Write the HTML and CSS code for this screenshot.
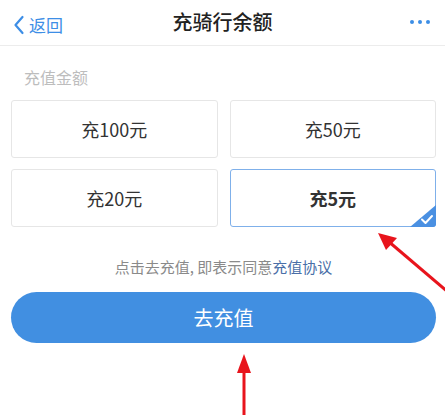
FILE: index.html
```html
<!DOCTYPE html>
<html>
<head>
    <meta charset="utf-8">
    <title>充骑行余额</title>
    <link rel="stylesheet" href="styles.css">
</head>
<body>
    <div class="ust-bar">
        <a class="geri">
            <svg width="12" height="20" viewBox="0 0 12 20"><path d="M9.5 2 L2.5 10 L9.5 18" fill="none" stroke="#3d8ee6" stroke-width="2.2" stroke-linecap="round" stroke-linejoin="round"/></svg>
            <span>返回</span>
        </a>
        <div class="baslik">充骑行余额</div>
        <div class="noktalar"><i></i><i></i><i></i></div>
    </div>

    <div class="icerik">
        <div class="etiket">充值金额</div>
        <div class="kartlar">
            <div class="kart">充100元</div>
            <div class="kart">充50元</div>
            <div class="kart">充20元</div>
            <div class="kart secili">充5元
                <span class="isaret">
                    <svg width="26" height="22" viewBox="0 0 26 22">
                        <path d="M26 0 L26 19 Q26 22 23 22 L0 22 Z" fill="#4a90e2"/>
                        <path d="M12 14.5 L15.5 18 L22 11" fill="none" stroke="#fff" stroke-width="2" stroke-linecap="round" stroke-linejoin="round"/>
                    </svg>
                </span>
            </div>
        </div>
        <p class="bilgi">点击去充值, 即表示同意<a>充值协议</a></p>
        <button class="dugme">去充值</button>
    </div>

    <!-- kırmızı oklar -->
    <svg class="oklar" width="445" height="415" viewBox="0 0 445 415">
        <line x1="455" y1="298" x2="388" y2="241" stroke="#e8141c" stroke-width="3"/>
        <path d="M378 233 L397 238 L386 250 Z" fill="#e8141c"/>
        <line x1="244" y1="415" x2="244" y2="370" stroke="#e8141c" stroke-width="3"/>
        <path d="M244 354 L251 373 L237 373 Z" fill="#e8141c"/>
    </svg>
</body>
</html>
```

FILE: styles.css
```css
body {margin:0; background:#fff; font-family:"Noto Sans CJK SC", "Noto Sans", sans-serif; color:#333;}

.ust-bar {
    position: relative;
    height: 45px;
    border-bottom: 1px solid #ececec;
    display: flex;
    align-items: center;
    justify-content: center;}
.geri {
    position: absolute;
    left: 13px;
    top: 12px;
    display: flex;
    align-items: center;
    gap: 4px;
    color: #3d8ee6;
    font-size: 17px;}
.baslik {font-size: 20px; font-weight: 500; color: #222; margin-top: -2px;}
.noktalar {
    position: absolute;
    right: 15px;
    top: 20px;
    display: flex;
    gap: 4px;}
.noktalar i {display:block; width:4px; height:4px; border-radius:50%; background:#3d8ee6;}

.icerik {padding: 0 9px 0 11px;}
.etiket {color: #bdbdbd; font-size: 16px; margin: 20px 0 0 13px; line-height: 22px;}
.kartlar {
    display: grid;
    grid-template-columns: 1fr 1fr;
    gap: 11px 12px;
    margin-top: 12px;}
.kart {
    position: relative;
    height: 56px;
    border: 1px solid #e6e6e6;
    border-radius: 3px;
    display: flex;
    align-items: center;
    justify-content: center;
    font-size: 18px;
    color: #333;}
.kart.secili {border-color: #7fb0ea; font-weight: 700;}
.isaret {position: absolute; right: -1px; bottom: -1px; line-height: 0;}

.bilgi {text-align: center; font-size: 15px; color: #8a8a8a; margin: 29px 0 0; line-height: 22px;}
.bilgi a {color: #4a6fa8;}
.dugme {
    display: block;
    width: 100%;
    height: 51px;
    margin-top: 14px;
    border: none;
    border-radius: 26px;
    background: #418fe1;
    color: #fff;
    font-family: inherit;
    font-size: 20px;}

.oklar {position: absolute; left: 0; top: 0; pointer-events: none;}
```
